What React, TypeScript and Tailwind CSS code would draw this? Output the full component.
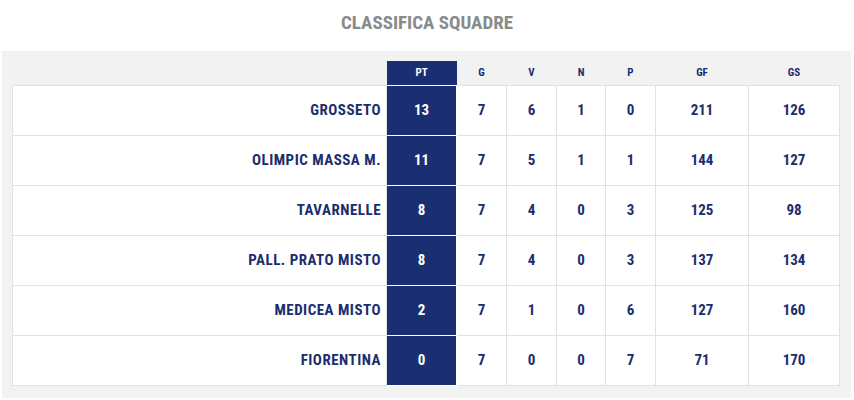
import React from 'react';

const rows = [
  { team: 'GROSSETO', pt: 13, g: 7, v: 6, n: 1, p: 0, gf: 211, gs: 126 },
  { team: 'OLIMPIC MASSA M.', pt: 11, g: 7, v: 5, n: 1, p: 1, gf: 144, gs: 127 },
  { team: 'TAVARNELLE', pt: 8, g: 7, v: 4, n: 0, p: 3, gf: 125, gs: 98 },
  { team: 'PALL. PRATO MISTO', pt: 8, g: 7, v: 4, n: 0, p: 3, gf: 137, gs: 134 },
  { team: 'MEDICEA MISTO', pt: 2, g: 7, v: 1, n: 0, p: 6, gf: 127, gs: 160 },
  { team: 'FIORENTINA', pt: 0, g: 7, v: 0, n: 0, p: 7, gf: 71, gs: 170 },
];

const font = { fontFamily: '"Roboto Condensed", "Liberation Sans Narrow", Roboto, sans-serif' };

const App: React.FC = () => {
  return (
    <div className="w-[854px] h-[400px] bg-white overflow-hidden" style={font}>
      {/* Title */}
      <h2 className="h-[51px] pt-[9px] text-center text-[19px] font-bold text-[#8a8a8a]">
        CLASSIFICA SQUADRE
      </h2>

      {/* Standings panel */}
      <div className="mx-[2px] w-[849px] bg-[#f2f2f2] pt-[10px] pl-[10px] pb-[12px]">
        <table className="border-collapse text-[#1b2d6e] font-bold">
          <thead>
            <tr className="h-[24px] text-[11px]">
              <th className="w-[374px]"></th>
              <th className="w-[70px] bg-[#1a2e72] text-white">PT</th>
              <th className="w-[50px]">G</th>
              <th className="w-[50px]">V</th>
              <th className="w-[49px]">N</th>
              <th className="w-[50px]">P</th>
              <th className="w-[93px]">GF</th>
              <th className="w-[91px]">GS</th>
            </tr>
          </thead>
          <tbody className="bg-white text-[15px]">
            {rows.map((r) => (
              <tr key={r.team} className="h-[50px]">
                <td className="border border-[#e2e2e2] text-right pr-[5px] tracking-[0.5px]">{r.team}</td>
                <td className="border border-white border-l-[#e2e2e2] bg-[#1a2e72] text-white text-center">{r.pt}</td>
                <td className="border border-[#e2e2e2] text-center">{r.g}</td>
                <td className="border border-[#e2e2e2] text-center">{r.v}</td>
                <td className="border border-[#e2e2e2] text-center">{r.n}</td>
                <td className="border border-[#e2e2e2] text-center">{r.p}</td>
                <td className="border border-[#e2e2e2] text-center">{r.gf}</td>
                <td className="border border-[#e2e2e2] text-center">{r.gs}</td>
              </tr>
            ))}
          </tbody>
        </table>
      </div>
    </div>
  );
};

export default App;
